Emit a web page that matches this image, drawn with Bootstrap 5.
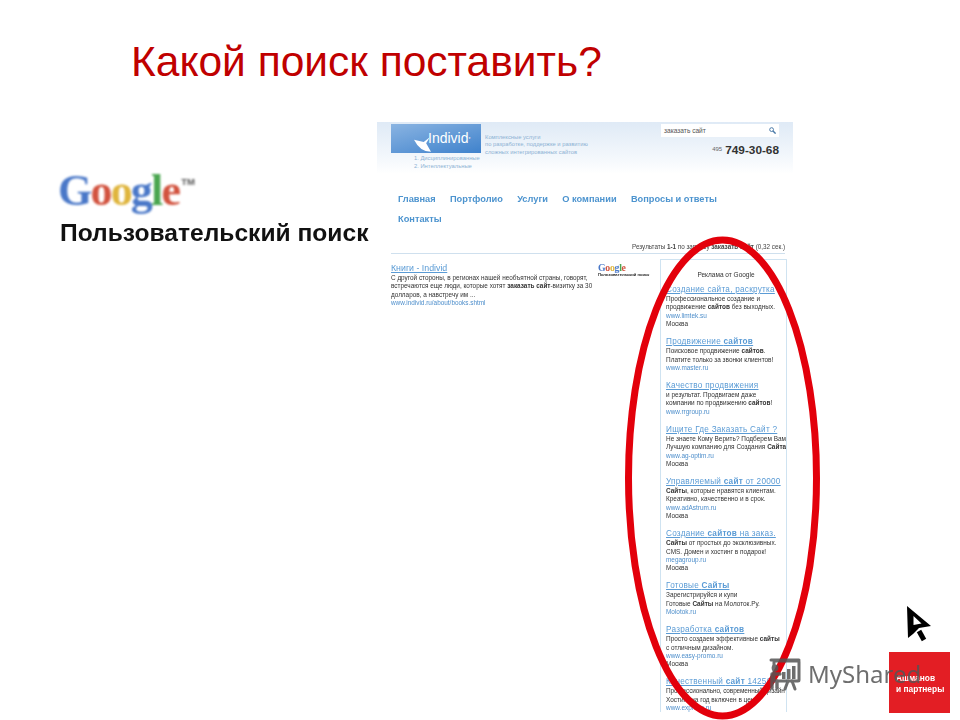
<!DOCTYPE html>
<html lang="ru">
<head>
<meta charset="utf-8">
<title>Какой поиск поставить?</title>
<link href="https://cdn.jsdelivr.net/npm/bootstrap@5.3.0/dist/css/bootstrap.min.css" rel="stylesheet">
<style>
html,body{margin:0;padding:0;background:#fff;}
body{font-family:"Liberation Sans",Arial,sans-serif;}
.slide{position:relative;width:960px;height:720px;overflow:hidden;background:#fff;}
.slide-title{position:absolute;left:131px;top:38px;margin:0;font-size:42.5px;line-height:48px;font-weight:400;color:#c00000;white-space:nowrap;}
.gblock{position:absolute;left:58px;top:166px;}
.gword{font-family:"Liberation Serif",serif;font-weight:700;font-size:44px;line-height:50px;letter-spacing:-1.8px;white-space:nowrap;filter:blur(.9px);}
.gword sup{font-family:"Liberation Sans",sans-serif;font-weight:700;font-size:9.5px;letter-spacing:0;color:#555;top:-2.1em;margin-left:2px;}
.gb{color:#4a78c8}.gr{color:#d2533f}.gy{color:#dfb53d}.gg{color:#4aa650}
.gsub{font-weight:700;font-size:24.6px;line-height:24px;color:#111;margin-left:2px;margin-top:5px;white-space:nowrap;filter:blur(.7px);}
.shot{position:absolute;left:377px;top:122px;width:416px;height:598px;overflow:hidden;filter:blur(.45px);font-size:6.4px;line-height:8.4px;color:#333;}
.shot-head{height:52px;background:linear-gradient(#dfeaf6,#f4f8fc 70%,#fff);position:relative;padding:2px 14px 0 14px;}
.logo-box{width:90px;height:29px;background:linear-gradient(165deg,#8ab4e2,#3f82cc);color:#fff;font-size:14px;line-height:29px;padding-left:37px;position:relative;}
.logo-swoosh{position:absolute;left:23px;top:12px;}
.tagline{color:#8db2d4;font-size:5.8px;line-height:7.3px;margin-left:4px;padding-top:10px;white-space:nowrap;}
.sublist{color:#8db2d4;font-size:5.8px;line-height:7.8px;margin-left:23px;padding-top:2px;white-space:nowrap;}
.searchbar{width:118px;height:13px;background:#fff;line-height:13px;padding:0 3px;font-size:6.6px;color:#555;}
.phone{font-weight:700;font-size:11.8px;line-height:14px;color:#333;margin-top:5px;text-align:right;white-space:nowrap;}
.phone small{font-size:6px;font-weight:400;color:#666;vertical-align:3px;margin-right:3px;}
.topnav{padding:15px 21px 0;font-weight:700;font-size:9.25px;line-height:20px;color:#4d94cf;height:67px;}
.topnav span{margin-right:14.3px;}
.stats{text-align:right;padding-right:8px;height:11px;font-size:6.3px;line-height:11px;color:#444;}
.rule{height:1px;background:#cfe0ee;margin:1px 0 0 14px;width:394px;}
.result-col{width:207px;margin-left:14px;padding-top:9px;flex:none;}
.rtitle{color:#5a9bd5;text-decoration:underline;font-size:8.8px;line-height:11px;white-space:nowrap;}
.rgreen{color:#4d8ecb;}
.gsmall{width:53px;margin-left:0;padding-top:9px;flex:none;}
.gsmall-w{font-family:"Liberation Serif",serif;font-weight:700;font-size:9.8px;line-height:10px;letter-spacing:-.3px;}
.gsmall-s{font-weight:700;font-size:4.1px;line-height:4px;color:#222;white-space:nowrap;}
.adbox{width:127px;margin-left:9px;margin-top:5px;border:1px solid #cfe3f1;border-bottom:0;height:453px;padding:10px 0 0 5px;flex:none;overflow:hidden;}
.adhead{text-align:center;font-size:6.5px;line-height:10px;color:#333;margin-bottom:5px;}
.ad{margin-bottom:8.7px;white-space:nowrap;font-size:6.45px;line-height:8.35px;color:#333;}
.adt{display:block;color:#5a9bd5;text-decoration:underline;font-size:8.2px;line-height:10.1px;letter-spacing:.25px;}
.adu{display:block;color:#4d8ecb;}
.tight{letter-spacing:-.12px;}
.ring{position:absolute;left:0;top:0;pointer-events:none;}
.brand{position:absolute;left:889px;top:652px;width:61px;height:61px;background:#e31e24;color:#fff;font-weight:700;font-size:8.4px;line-height:11px;padding:21px 0 0 7px;white-space:nowrap;filter:blur(.3px);}
.wm{position:absolute;left:768px;top:657px;display:flex;align-items:center;gap:6px;color:#555;opacity:.85;font-family:"Noto Sans",sans-serif;font-size:24px;line-height:34px;white-space:nowrap;}
.cursor{position:absolute;left:905px;top:603px;}
</style>
</head>
<body>
<div class="slide">
  <h1 class="slide-title">Какой поиск поставить?</h1>

  <div class="gblock">
    <div class="gword"><span class="gb">G</span><span class="gr">o</span><span class="gy">o</span><span class="gb">g</span><span class="gg">l</span><span class="gr">e</span><sup>ТМ</sup></div>
    <div class="gsub">Пользовательский поиск</div>
  </div>

  <div class="shot">
    <div class="shot-head d-flex justify-content-between">
      <div class="d-flex">
        <div>
          <div class="logo-box">
            <svg class="logo-swoosh" width="17" height="17" viewBox="0 0 14 14"><path d="M0 3 L8 5 L13 1 L10 6 L14 13 Q5 13 0 3Z" fill="#fff"/></svg>
            Individ<sup style="font-size:5px">*</sup>
          </div>
          <div class="sublist">1. Дисциплинированные<br>2. Интеллектуальные</div>
        </div>
        <div class="tagline">Комплексные услуги<br>по разработке, поддержке и развитию<br>сложных интегрированных сайтов</div>
      </div>
      <div>
        <div class="searchbar d-flex justify-content-between align-items-center"><span>заказать сайт</span>
          <svg width="7" height="7" viewBox="0 0 7 7"><circle cx="2.6" cy="2.6" r="1.9" fill="none" stroke="#4a7aa8" stroke-width="1"/><path d="M4 4 L6.6 6.6" stroke="#4a7aa8" stroke-width="1.4"/></svg>
        </div>
        <div class="phone"><small>495</small>749-30-68</div>
      </div>
    </div>
    <div class="topnav">
      <span>Главная</span><span>Портфолио</span><span>Услуги</span><span>О компании</span><span>Вопросы и ответы</span><br><span>Контакты</span>
    </div>
    <div class="stats">Результаты <b>1-1</b> по запросу <b>заказать сайт</b> (0,32 сек.)</div>
    <div class="rule"></div>
    <div class="d-flex">
      <div class="result-col">
        <div class="rtitle">Книги - Individ</div>
        <div>С другой стороны, в регионах нашей необъятной страны, говорят,<br>встречаются еще люди, которые хотят <b>заказать сайт</b>-визитку за 30<br>долларов, а навстречу им ...</div>
        <div class="rgreen">www.individ.ru/about/books.shtml</div>
      </div>
      <div class="gsmall">
        <div class="gsmall-w"><span class="gb">G</span><span class="gr">o</span><span class="gy">o</span><span class="gb">g</span><span class="gg">l</span><span class="gr">e</span></div>
        <div class="gsmall-s">Пользовательский поиск</div>
      </div>
      <div class="adbox">
        <div class="adhead">Реклама от Google</div>
        <div class="ad"><a class="adt">Создание сайта, раскрутка</a>Профессиональное создание и<br>продвижение <b>сайтов</b> без выходных.<span class="adu">www.limtek.su</span>Москва</div>
        <div class="ad"><a class="adt">Продвижение <b>сайтов</b></a>Поисковое продвижение <b>сайтов</b>.<br>Платите только за звонки клиентов!<span class="adu">www.master.ru</span></div>
        <div class="ad"><a class="adt">Качество продвижения</a>и результат. Продвигаем даже<br>компании по продвижению <b>сайтов</b>!<span class="adu">www.rrgroup.ru</span></div>
        <div class="ad"><a class="adt">Ищите Где Заказать Сайт ?</a>Не знаете Кому Верить? Подберем Вам<br>Лучшую компанию для Создания <b>Сайта</b><span class="adu">www.ag-optim.ru</span>Москва</div>
        <div class="ad"><a class="adt">Управляемый <b>сайт</b> от 20000</a><b>Сайты</b>, которые нравятся клиентам.<br>Креативно, качественно и в срок.<span class="adu">www.adAstrum.ru</span>Москва</div>
        <div class="ad"><a class="adt">Создание <b>сайтов</b> на заказ.</a><b>Сайты</b> от простых до эксклюзивных.<br>CMS. Домен и хостинг в подарок!<span class="adu">megagroup.ru</span>Москва</div>
        <div class="ad"><a class="adt">Готовые <b>Сайты</b></a>Зарегистрируйся и купи<br>Готовые <b>Сайты</b> на Молоток.Ру.<span class="adu">Molotok.ru</span></div>
        <div class="ad"><a class="adt">Разработка <b>сайтов</b></a>Просто создаем эффективные <b>сайты</b><br>с отличным дизайном.<span class="adu">www.easy-promo.ru</span>Москва</div>
        <div class="ad mb-0"><a class="adt">Качественный <b>сайт</b> 14250</a><span class="tight">Профессионально, современный дизайн</span><br>Хостинг на год включен в цену<span class="adu">www.express.ru</span></div>
      </div>
    </div>
  </div>

  <svg class="ring" width="960" height="720" viewBox="0 0 960 720"><ellipse cx="722.5" cy="478" rx="94" ry="238" fill="none" stroke="#e3000b" stroke-width="7"/></svg>

  <div class="brand">Ашманов<br>и партнеры</div>

  <div class="wm">
    <svg width="34" height="34" viewBox="0 0 34 34" fill="none" stroke="#555" stroke-width="3" stroke-linecap="round"><path d="M3 3H31"/><rect x="6" y="4" width="25" height="20" rx="1"/><circle cx="7" cy="11" r="3.4" fill="#555" stroke="none"/><path d="M4 17v14M4 17h8M9 24v7" stroke-width="3.4"/><rect x="14" y="15" width="3.5" height="7" fill="#555" stroke="none"/><rect x="19" y="12" width="3.5" height="10" fill="#555" stroke="none"/><rect x="24" y="9" width="3.5" height="13" fill="#555" stroke="none"/><path d="M20 24l-3 8M24 24l3 8"/></svg>
    <span>MyShared</span>
  </div>

  <svg class="cursor" width="30" height="42" viewBox="0 0 30 42"><path d="M2 3 L26 23 L14 25 L8 31 L3 35Z" fill="#000"/><path d="M8.5 13 L16.5 20.5 L8.5 22Z" fill="#fff"/><path d="M14 28 L19 37" stroke="#000" stroke-width="5"/></svg>
</div>
</body>
</html>
